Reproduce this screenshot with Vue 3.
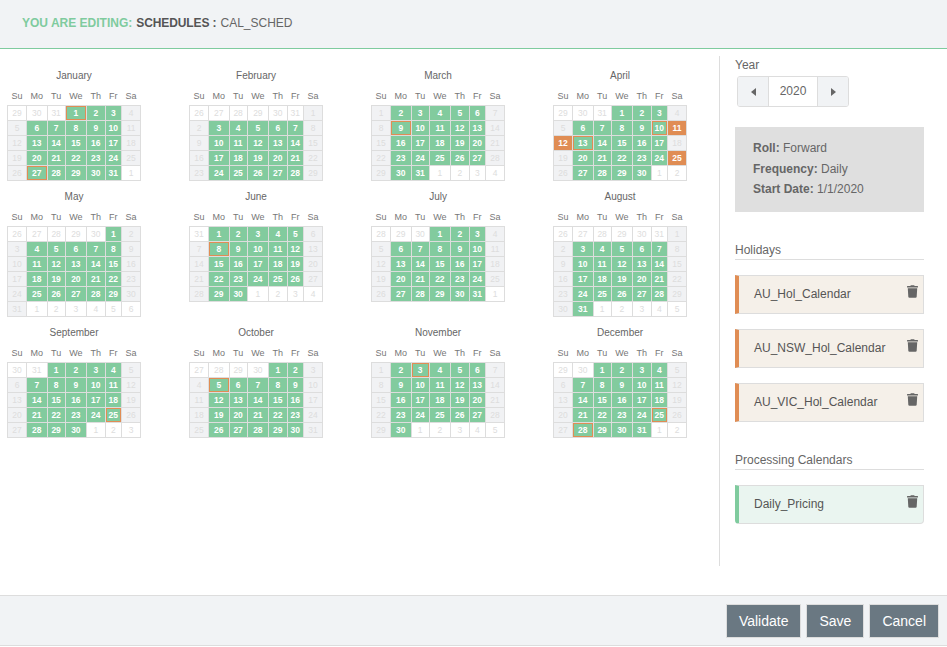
<template>
  <div class="page">
    <header class="top">
      <span class="editing">YOU ARE EDITING:</span>
      <b class="kind">SCHEDULES :</b>
      <span class="name">CAL_SCHED</span>
    </header>

    <div class="body">
      <div class="months">
        <div v-for="m in months" :key="m.name" class="month">
          <div class="month-title">{{ m.name }}</div>
          <table class="cal">
            <thead>
              <tr><th v-for="d in dayNames" :key="d">{{ d }}</th></tr>
            </thead>
            <tbody>
              <tr v-for="(week, i) in m.weeks" :key="i">
                <td v-for="c in week" :key="c.key" :class="c.cls">{{ c.day }}</td>
              </tr>
            </tbody>
          </table>
        </div>
      </div>

      <aside class="side">
        <div class="label">Year</div>
        <div class="stepper">
          <button class="step">
            <svg width="5" height="8" viewBox="0 0 5 8"><path d="M5 0v8L0 4z" /></svg>
          </button>
          <span class="year">2020</span>
          <button class="step">
            <svg width="5" height="8" viewBox="0 0 5 8"><path d="M0 0v8l5-4z" /></svg>
          </button>
        </div>

        <div class="summary">
          <div><b>Roll:</b> Forward</div>
          <div><b>Frequency:</b> Daily</div>
          <div><b>Start Date:</b> 1/1/2020</div>
        </div>

        <div class="section holidays-title">Holidays</div>
        <div v-for="h in holidays" :key="h" class="card holiday">
          <span>{{ h }}</span>
          <svg class="trash" viewBox="0 0 448 512"><path :d="trashPath" /></svg>
        </div>

        <div class="section processing-title">Processing Calendars</div>
        <div class="card processing">
          <span>Daily_Pricing</span>
          <svg class="trash" viewBox="0 0 448 512"><path :d="trashPath" /></svg>
        </div>
      </aside>
    </div>

    <footer class="bottom">
      <button class="btn">Validate</button>
      <button class="btn">Save</button>
      <button class="btn">Cancel</button>
    </footer>
  </div>
</template>

<script setup>
const dayNames = ['Su', 'Mo', 'Tu', 'We', 'Th', 'Fr', 'Sa']
const monthNames = ['January', 'February', 'March', 'April', 'May', 'June', 'July', 'August', 'September', 'October', 'November', 'December']
const holidays = ['AU_Hol_Calendar', 'AU_NSW_Hol_Calendar', 'AU_VIC_Hol_Calendar']

// month index -> days picked / holidays
const picked = { 0: [1, 27], 2: [9], 3: [10, 13], 5: [8], 8: [25], 9: [5], 10: [3], 11: [25, 28] }
const offDays = { 3: [11, 12, 25] }

const trashPath = 'M432 32H312l-9.4-18.7A24 24 0 0 0 281.1 0H166.8a23.72 23.72 0 0 0-21.4 13.3L136 32H16A16 16 0 0 0 0 48v32a16 16 0 0 0 16 16h416a16 16 0 0 0 16-16V48a16 16 0 0 0-16-16zM53.2 467a48 48 0 0 0 47.9 45h245.8a48 48 0 0 0 47.9-45L416 128H32z'

const buildMonth = (index) => {
  const first = new Date(2020, index, 1)
  const total = new Date(2020, index + 1, 0).getDate()
  const rows = Math.ceil((first.getDay() + total) / 7)
  const weeks = []
  for (let w = 0; w < rows; w++) {
    const week = []
    for (let d = 0; d < 7; d++) {
      const date = new Date(2020, index, 1 - first.getDay() + w * 7 + d)
      const inMonth = date.getMonth() === index
      const day = date.getDate()
      let cls = 'out'
      if (inMonth) {
        if ((offDays[index] || []).includes(day)) cls = 'off'
        else if (d === 0 || d === 6) cls = 'weekend'
        else cls = 'work'
        if ((picked[index] || []).includes(day)) cls += ' picked'
      }
      week.push({ key: w + '-' + d, day, cls })
    }
    weeks.push(week)
  }
  return { name: monthNames[index], weeks }
}

const months = monthNames.map((_, i) => buildMonth(i))
</script>

<style>
html, body { margin: 0; background: #fff; }
</style>

<style scoped>
.page {
  height: 647px;
  display: flex;
  flex-direction: column;
  font-family: "Liberation Sans", Arial, sans-serif;
  color: #666;
  overflow: hidden;
}
.top {
  height: 45px;
  flex: none;
  display: flex;
  align-items: center;
  gap: 4px;
  padding: 0 0 3px 22px;
  font-size: 12px;
  background: #f1f3f5;
  border-bottom: 1px solid #7fcb9e;
}
.editing { color: #7fcb9e; font-weight: bold; }
.kind { color: #555; letter-spacing: -0.1px; }
.name { color: #666; }

.body {
  flex: 1;
  display: flex;
  min-height: 0;
}
.months {
  width: 719px;
  flex: none;
  padding: 19px 0 0 7px;
  box-sizing: border-box;
  display: grid;
  grid-template-columns: repeat(4, 182px);
  align-content: start;
  align-items: start;
}
.month {
  width: fit-content;
  margin-bottom: 8px;
}
.month-title {
  height: 16px;
  line-height: 16px;
  margin-bottom: 7px;
  font-size: 10px;
  color: #666;
  text-align: center;
}
.cal {
  border-collapse: collapse;
  font-size: 9px;
}
.cal th {
  font-weight: normal;
  color: #777;
  line-height: 10px;
  padding: 0 4px 4px;
}
.cal td {
  height: 15px;
  padding: 0;
  box-sizing: border-box;
  border: 1px solid #ddd;
  font-size: 8.5px;
  text-align: center;
  line-height: 12px;
}
.out { color: #ddd; background: #fff; }
.weekend { color: #ddd; background: #f1f2f4; }
.work { color: #fff; background: #82cb9e; font-weight: bold; }
.off { color: #fff; background: #e08d54; font-weight: bold; }
.cal td.picked { position: relative; }
.cal td.picked::after {
  content: "";
  position: absolute;
  inset: 0;
  border: 1px solid #e08d54;
}

.side {
  width: 189px;
  flex: none;
  margin: 7px 0 29px;
  padding-left: 15px;
  border-left: 1px solid #ddd;
  font-size: 12px;
}
.label {
  height: 16px;
  line-height: 18px;
}
.stepper {
  display: flex;
  width: 112px;
  height: 31px;
  margin: 4px 0 0 2px;
  box-sizing: border-box;
  border: 1px solid #ddd;
  border-radius: 3px;
  overflow: hidden;
}
.step {
  width: 30px;
  padding: 0;
  border: 0;
  background: #f1f3f5;
  display: flex;
  align-items: center;
  justify-content: center;
}
.step svg { fill: #666; }
.year {
  flex: 1;
  border: solid #ddd;
  border-width: 0 1px;
  text-align: center;
  line-height: 29px;
}
.summary {
  height: 85px;
  margin-top: 20px;
  padding: 11px 18px 0;
  box-sizing: border-box;
  background: #dfdfdf;
  line-height: 20.5px;
}
.section {
  height: 17px;
  line-height: 16px;
  border-bottom: 1px solid #ddd;
}
.holidays-title { margin-top: 30px; margin-bottom: 15px; }
.processing-title { margin-top: 30px; margin-bottom: 15px; }
.card {
  height: 39px;
  margin-bottom: 15px;
  padding: 0 5px 0 15px;
  box-sizing: border-box;
  border: 1px solid #ddd;
  border-left: 4px solid;
  display: flex;
  justify-content: space-between;
  line-height: 36px;
  color: #555;
}
.holiday { background: #f5f0e9; border-left-color: #e08d54; }
.processing {
  background: #eaf5f0;
  border-left-color: #7fcb9e;
  border-radius: 0 0 4px 4px;
}
.trash {
  width: 11px;
  height: 13px;
  margin-top: 9px;
  fill: #666;
}

.bottom {
  height: 49px;
  flex: none;
  margin-bottom: 1px;
  display: flex;
  justify-content: flex-end;
  align-items: flex-start;
  gap: 5px;
  padding: 0 8px 0 0;
  background: #f1f3f5;
  border-top: 1px solid #ddd;
  border-bottom: 1px solid #ddd;
}
.btn {
  margin-top: 8px;
  height: 34px;
  padding: 0 12px;
  border: 1px solid #ddd;
  background: #6a7882;
  color: #fff;
  font: 14px "Liberation Sans", Arial, sans-serif;
}
</style>
